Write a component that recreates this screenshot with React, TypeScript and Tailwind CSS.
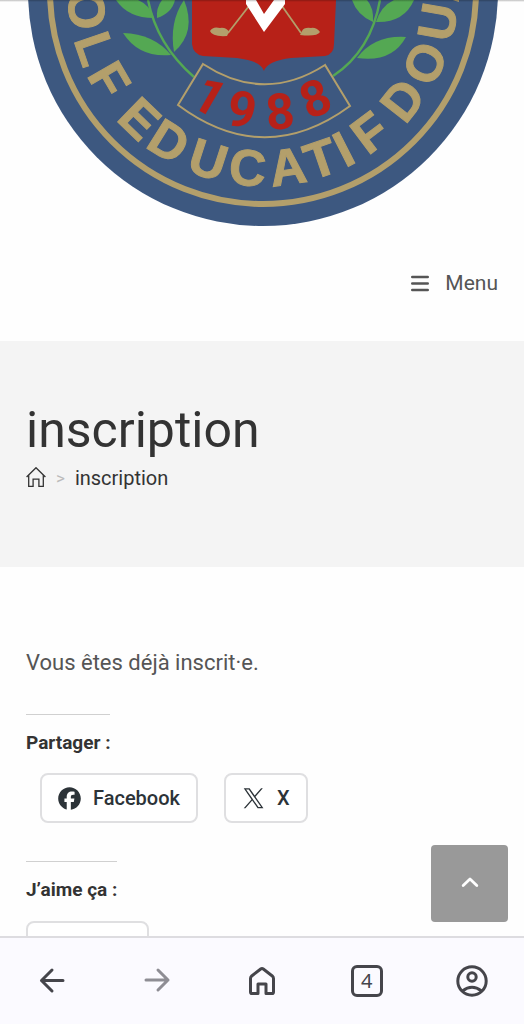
import React, { useRef } from 'react';

const GOLD = '#b39f6b';

// angle is measured from the bottom of the badge, positive to the right
const ringLetters = [
  { char: 'O', angle: -84 },
  { char: 'L', angle: -71 },
  { char: 'F', angle: -60 },
  { char: 'E', angle: -44 },
  { char: 'D', angle: -32 },
  { char: 'U', angle: -18 },
  { char: 'C', angle: -5 },
  { char: 'A', angle: 8 },
  { char: 'T', angle: 19 },
  { char: 'I', angle: 27 },
  { char: 'F', angle: 37 },
  { char: 'D', angle: 52 },
  { char: 'O', angle: 66 },
  { char: 'U', angle: 80 },
  { char: 'A', angle: 92 },
];

const yearDigits = [
  { char: '1', x: 210, y: 96, rotate: 30 },
  { char: '9', x: 242, y: 109, rotate: 11 },
  { char: '8', x: 280, y: 111, rotate: -5 },
  { char: '8', x: 315, y: 98, rotate: -22 },
];

const ClubLogo = () => (
  <svg viewBox="26 0 472 228" className="w-full block" role="img" aria-label="Golf Educatif Douala">
    <circle cx="263" cy="-9" r="235" fill="#3d5880" />
    <circle cx="263" cy="-9" r="213" fill="none" stroke={GOLD} strokeWidth="6" />

    <g fill="#54a853">
      <path d="M116 0 Q128 18 154 18 Q150 5 138 0Z" />
      <path d="M157 18 Q172 13 175 0 L162 0 Q156 8 157 18Z" />
      <path d="M123 33 Q139 58 171 55 Q154 34 123 33Z" />
      <path d="M174 52 Q169 22 184 0 Q197 32 174 52Z" />
      <path d="M352 0 Q357 15 373 22 Q374 8 367 0Z" />
      <path d="M376 22 Q404 23 414 0 L394 0 Q381 6 376 22Z" />
      <path d="M357 58 Q392 63 406 37 Q374 35 357 58Z" />
    </g>
    <g fill="none" stroke="#54a853" strokeWidth="2.4">
      <path d="M148 0 Q157 45 194 77" />
      <path d="M380 0 Q371 51 333 76" />
    </g>

    <path d="M192 0 L192 44 Q193 54 203 56 L237 58 Q261 61 264 71 Q267 61 291 58 L325 56 Q334 54 334 44 L336 0Z" fill="#b72118" />
    <g fill="none" stroke={GOLD} strokeWidth="1.8">
      <path d="M249 6 L228 33" />
      <path d="M282 6 L301 33" />
    </g>
    <path d="M210 31 Q213 26 220 28 Q226 27 229 32 L227 36 Q212 37 210 31Z" fill={GOLD} />
    <path d="M320 32 Q316 27 311 28 Q304 27 302 31 L300 35 Q317 37 320 32Z" fill={GOLD} />
    <path d="M246 0 L246 4 L264 32 L285 4 L285 0 L274 0 L264 14 L256 0Z" fill="#ffffff" />

    <path d="M203 64 Q264 104 325 65 L350 106 Q264 169 178 105Z" fill="#3d5880" stroke={GOLD} strokeWidth="2" />
    <g fontWeight="700" textAnchor="middle">
      {yearDigits.map((d, i) => (
        <text key={i} transform={`translate(${d.x} ${d.y}) rotate(${d.rotate})`} y="18" fontSize="50" fontFamily="Roboto, sans-serif" fill="#b72118">{d.char}</text>
      ))}
      {ringLetters.map((l, i) => (
        <text key={i} transform={`translate(263 -9) rotate(${-l.angle})`} y="195" fontSize="51" fontFamily="'Liberation Sans', Arial, sans-serif" fill={GOLD} stroke={GOLD} strokeWidth="1">{l.char}</text>
      ))}
    </g>
  </svg>
);

const HomeOutline = () => (
  <svg className="w-5 h-5" viewBox="0 0 20 20" fill="none" stroke="currentColor" strokeWidth="1.3">
    <path d="M0.6 10 L10 0.7 L19.4 10" />
    <path d="M2.700 8.200 V19.300 H7.100 V12.200 H12.900 V19.300 H17.300 V8.200" />
  </svg>
);

const FacebookIcon = () => (
  <svg className="w-[23px] h-[23px]" viewBox="0 0 24 24" fill="currentColor">
    <path d="M12 .2C5.500.2.200 5.500.2 12c0 5.500 3.800 10.200 8.900 11.500v-7.900H6.700V12h2.400v-1.500c0-4 1.800-5.900 5.700-5.900.7 0 2 .1 2.500.3v3.300c-.3 0-.7 0-1.300 0-1.900 0-2.600.7-2.600 2.500V12h3.700l-.6 3.600h-3.100v8.100c5.800-.7 10.400-5.700 10.400-11.700C23.800 5.500 18.500.2 12 .2z" />
  </svg>
);

const XIcon = () => (
  <svg className="w-[23px] h-[23px]" viewBox="0 0 24 24" fill="currentColor">
    <path d="M13.982 10.622 20.540 3h-1.554l-5.693 6.618L8.745 3H3.500l6.876 10.007L3.500 21h1.554l6.012-6.989L15.868 21h5.245l-7.131-10.378Zm-2.128 2.474-.697-.997-5.543-7.930H8l4.474 6.400.697.996 5.815 8.318h-2.387l-4.745-6.787Z" transform="translate(-2.300 -2.300) scale(1.170)" />
  </svg>
);

const shareButton = 'flex items-center gap-3 h-[50px] px-4 bg-white border-2 border-[#dfdfe1] rounded-lg text-[20px] leading-6 font-medium text-[#2c3338]';
const widgetTitle = 'inline-block border-t border-[#d0d0d0] pt-4 text-[19px] leading-6 font-bold text-[#333333]';

const BrowserBar = () => (
  <nav className="shrink-0 h-[88px] bg-[#fbfaff] border-t-2 border-[#dddce0] grid grid-cols-5 place-items-center text-[#45454b]">
    <button aria-label="Page précédente">
      <svg className="w-8 h-8" viewBox="0 0 32 32" fill="none" stroke="currentColor" strokeWidth="3" strokeLinecap="round" strokeLinejoin="round"><path d="M27 15.500H5.500M16 5L5.500 15.500L16 26" /></svg>
    </button>
    <button aria-label="Page suivante" className="text-[#8e8d94]">
      <svg className="w-8 h-8" viewBox="0 0 32 32" fill="none" stroke="currentColor" strokeWidth="3" strokeLinecap="round" strokeLinejoin="round"><path d="M5 15H27M17 5L27 15L17 25" /></svg>
    </button>
    <button aria-label="Accueil">
      <svg className="w-8 h-8" viewBox="0 0 32 32" fill="none" stroke="currentColor" strokeWidth="3" strokeLinejoin="round"><path d="M4.500 13.500Q4.500 12 5.700 11L14.700 4Q16 3 17.300 4L26.300 11Q27.500 12 27.500 13.500V27Q27.500 28.600 26 28.600H20V19H12V28.600H6Q4.500 28.600 4.500 27Z" /></svg>
    </button>
    <button aria-label="Onglets" className="w-8 h-8 border-3 border-current rounded-md flex items-center justify-center font-['Noto_Sans',sans-serif] text-[20px] leading-5">4</button>
    <button aria-label="Profil">
      <svg className="w-8 h-8" viewBox="0 0 32 32" fill="none" stroke="currentColor" strokeWidth="3">
        <circle cx="16" cy="16" r="14.200" />
        <circle cx="16" cy="12" r="4.200" />
        <path d="M6.500 26Q16 18.500 25.500 26" />
      </svg>
    </button>
  </nav>
);

const App: React.FC = () => {
  const pageRef = useRef<HTMLDivElement>(null);

  return (
    <div className="h-screen flex flex-col bg-[#fefefe] font-[Roboto,sans-serif] text-[#555555]">
      <div className="relative flex-1 min-h-0">
        <div ref={pageRef} className="h-full overflow-y-auto [scrollbar-width:none]">
          <header className="px-[26px]">
            <ClubLogo />
            <div className="flex justify-end pt-[41px] pb-[43px]">
              <button className="flex items-center gap-4 text-[21px] leading-[29px]">
                <svg className="w-[18px] h-[18px]" viewBox="0 0 18 18" stroke="currentColor" strokeWidth="2.600" strokeLinecap="round"><path d="M1.300 2H16.700M1.300 8.500H16.700M1.300 15H16.700" /></svg>
                Menu
              </button>
            </div>
          </header>

          <section className="bg-[#f4f4f4] px-[26px] pt-[59px] pb-[74px] text-[#333333]">
            <h1 className="text-[50px] leading-[60px]">inscription</h1>
            <nav className="flex items-center gap-[10px] pt-1 text-[20px] leading-[29px]" aria-label="Fil d’Ariane">
              <a href="#" className="pb-1" aria-label="Accueil"><HomeOutline /></a>
              <span className="text-[17px] text-[#bbbbbb]">&gt;</span>
              <a href="#">inscription</a>
            </nav>
          </section>

          <main className="px-[26px] pt-20 pb-12">
            <p className="text-[22px] leading-8">Vous êtes déjà inscrit·e.</p>

            <div className="pt-[35px]">
              <h3 className={widgetTitle}>Partager :</h3>
              <div className="flex gap-[26px] pl-[14px] pt-[17px]">
                <a href="#" className={shareButton}><FacebookIcon />Facebook</a>
                <a href="#" className={shareButton}><XIcon />X</a>
              </div>
            </div>

            <div className="pt-[38px]">
              <h3 className={widgetTitle}>J’aime ça :</h3>
              <div className="flex pt-[18px]">
                <button aria-label="J’aime" className={`${shareButton} w-[123px]`}>
                  <svg className="w-5 h-5" viewBox="0 0 20 20" fill="currentColor"><path d="M10 1l2.800 5.800 6.200.9-4.500 4.400 1 6.300L10 15.500l-5.500 2.900 1-6.300L1 7.700l6.200-.9z" /></svg>
                </button>
              </div>
            </div>
          </main>
        </div>

        {/* thin shade left under the address bar */}
        <div className="absolute inset-x-0 top-0 h-[2px] bg-gradient-to-b from-black/25 to-transparent"></div>

        <button
          aria-label="Haut de page"
          onClick={() => pageRef.current?.scrollTo({ top: 0, behavior: 'smooth' })}
          className="absolute right-4 bottom-[14px] w-[77px] h-[77px] rounded-sm bg-[#999999] text-white flex items-center justify-center"
        >
          <svg className="w-5 h-5" viewBox="0 0 20 20" fill="none" stroke="currentColor" strokeWidth="2.800" strokeLinecap="round" strokeLinejoin="round"><path d="M3.200 11.500L10 5L16.800 11.500" /></svg>
        </button>
      </div>
      <BrowserBar />
    </div>
  );
};

export default App;
